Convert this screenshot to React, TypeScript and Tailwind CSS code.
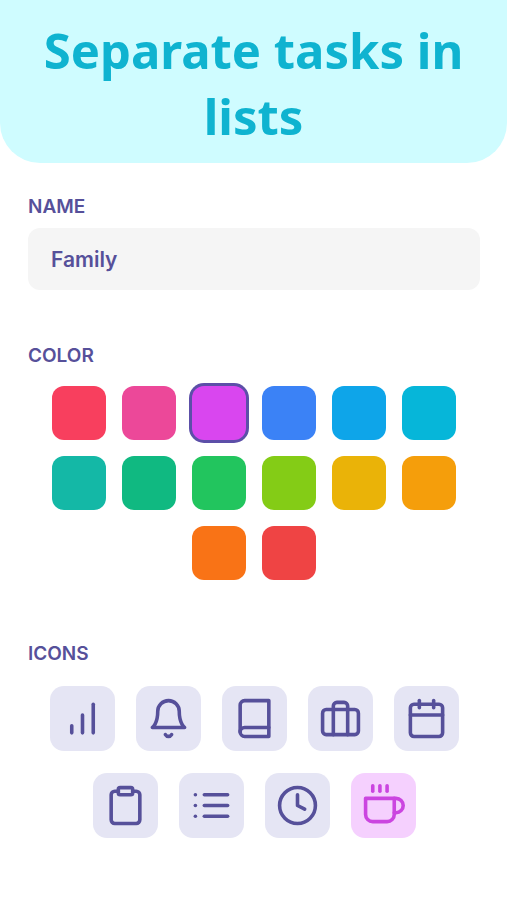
import { useState } from "react";
import type { IconType } from "react-icons";
import {
  FiBarChart,
  FiBell,
  FiBook,
  FiBriefcase,
  FiCalendar,
  FiClipboard,
  FiClock,
  FiCoffee,
  FiList,
} from "react-icons/fi";
import clsx from "clsx";

const COLORS: { name: string; className: string }[] = [
  { name: "Rose", className: "bg-[#f83f5e]" },
  { name: "Pink", className: "bg-[#ec4899]" },
  { name: "Fuchsia", className: "bg-[#d946ef]" },
  { name: "Blue", className: "bg-[#3b82f6]" },
  { name: "Sky", className: "bg-[#0ea5e9]" },
  { name: "Cyan", className: "bg-[#06b6d9]" },
  { name: "Teal", className: "bg-[#14b8a6]" },
  { name: "Emerald", className: "bg-[#10b981]" },
  { name: "Green", className: "bg-[#22c55e]" },
  { name: "Lime", className: "bg-[#84cc16]" },
  { name: "Yellow", className: "bg-[#eab308]" },
  { name: "Amber", className: "bg-[#f59e0b]" },
  { name: "Orange", className: "bg-[#f97316]" },
  { name: "Red", className: "bg-[#ef4444]" },
];

const ICONS: { name: string; Icon: IconType }[] = [
  { name: "Chart", Icon: FiBarChart },
  { name: "Bell", Icon: FiBell },
  { name: "Book", Icon: FiBook },
  { name: "Briefcase", Icon: FiBriefcase },
  { name: "Calendar", Icon: FiCalendar },
  { name: "Clipboard", Icon: FiClipboard },
  { name: "List", Icon: FiList },
  { name: "Clock", Icon: FiClock },
  { name: "Coffee", Icon: FiCoffee },
];

export default function App() {
  const [name, setName] = useState("Family");
  const [color, setColor] = useState("Fuchsia");
  const [icon, setIcon] = useState("Coffee");

  return (
    <div className="min-h-screen bg-white pb-14 font-['Inter',sans-serif] text-[#56509a]">
      <header className="rounded-b-[40px] bg-[#cffcff] px-7 pt-[17px] pb-[14px]">
        <h1 className="text-center font-['Noto_Sans',sans-serif] text-[49px] leading-[66px] font-bold text-[#0fb3d0]">
          Separate tasks in lists
        </h1>
      </header>

      <form className="pt-[30px] pr-[27px] pl-7">
        {/* Name */}
        <label htmlFor="list-name" className="block text-[19px] leading-7 font-semibold">
          NAME
        </label>
        <input
          id="list-name"
          type="text"
          value={name}
          onChange={(e) => setName(e.target.value)}
          className="mt-[7px] block h-[62px] w-full rounded-xl bg-[#f5f5f5] px-[23px] text-[21px] font-semibold outline-none"
        />

        {/* Color */}
        <fieldset className="mt-[52px]">
          <legend className="text-[19px] leading-7 font-semibold">COLOR</legend>
          <div className="mx-auto mt-4 flex max-w-[404px] flex-wrap justify-center gap-4">
            {COLORS.map((c) => (
              <input
                key={c.name}
                type="radio"
                name="color"
                aria-label={c.name}
                checked={color === c.name}
                onChange={() => setColor(c.name)}
                className={clsx(
                  "size-[54px] cursor-pointer appearance-none rounded-xl checked:ring-[3px] checked:ring-[#5c4fa8]",
                  c.className
                )}
              />
            ))}
          </div>
        </fieldset>

        {/* Icons */}
        <fieldset className="mt-[60px]">
          <legend className="text-[19px] leading-7 font-semibold">ICONS</legend>
          <div className="mx-auto mt-[18px] flex max-w-[410px] flex-wrap justify-center gap-x-[21px] gap-y-[22px]">
            {ICONS.map(({ name: label, Icon }) => (
              <label
                key={label}
                className={clsx(
                  "relative flex size-[65px] cursor-pointer items-center justify-center rounded-[14px]",
                  icon === label ? "bg-[#f5d0fe] text-[#cb45e0]" : "bg-[#e5e5f4] text-[#56509a]"
                )}
              >
                <input
                  type="radio"
                  name="icon"
                  aria-label={label}
                  checked={icon === label}
                  onChange={() => setIcon(label)}
                  className="sr-only"
                />
                <Icon className="size-[43px]" />
              </label>
            ))}
          </div>
        </fieldset>
      </form>
    </div>
  );
}
